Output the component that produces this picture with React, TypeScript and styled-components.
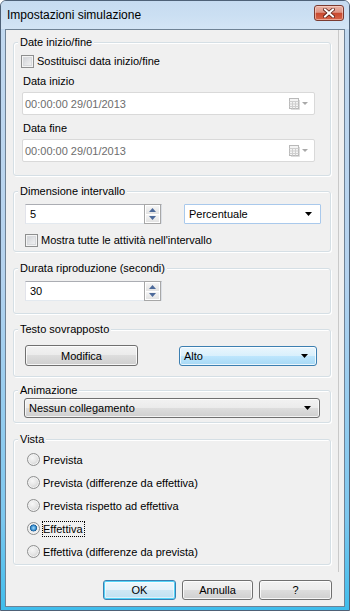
import React from 'react';
import styled, { createGlobalStyle } from 'styled-components';

const Global = createGlobalStyle`
  html, body { margin: 0; padding: 0; width: 350px; height: 611px; overflow: hidden; background: #ffffff; }
  * { box-sizing: border-box; }
  body { font-family: "Liberation Sans", Arial, sans-serif; font-size: 11px; color: #000; }
  #root { width: 350px; height: 611px; }
`;

const Window = styled.div`
  width: 350px;
  height: 611px;
  display: flex;
  flex-direction: column;
  border: 1px solid #4e6177;
  border-radius: 6px 6px 0 0;
  padding: 0 4px 3px 4px;
  background: linear-gradient(180deg, #c3d9ef 0%, #b4d2ee 45%, #7cc7ee 85%, #3fbdec 100%);
`;

const TitleBar = styled.div`
  height: 28px;
  flex: none;
  display: flex;
  align-items: flex-start;
  justify-content: space-between;
  margin: 0 -4px;
  padding: 0 5px 0 6px;
  border-radius: 5px 5px 0 0;
  background: linear-gradient(180deg, #c6dbf0 0%, #cbdff2 50%, #d3e4f5 100%);
`;

const TitleText = styled.span`
  font-size: 12px;
  line-height: 16px;
  margin-top: 6px;
  color: #000;
`;

const CloseButton = styled.div`
  width: 30px;
  height: 16px;
  margin-top: 4px;
  border: 1px solid #7a3a30;
  border-radius: 3px;
  display: flex;
  align-items: center;
  justify-content: center;
  background: linear-gradient(180deg, #eab3a6 0%, #de9585 45%, #c9492f 52%, #d6654a 100%);
  box-shadow: inset 0 0 0 1px rgba(255, 220, 210, 0.55);
`;

const Client = styled.div`
  flex: 1;
  display: flex;
  flex-direction: column;
  background: #f0f0f0;
  border: 1px solid #6f8295;
`;

const Panel = styled.div`
  width: 333px;
  height: 542px;
  flex: none;
  display: flex;
  flex-direction: column;
  padding: 12px 0 0 7px;
  border-right: 1px solid #c9c9c9;
`;

const Group = styled.div<{ $mt?: number; $pt: number; $pb: number; $pl: number }>`
  position: relative;
  width: 318px;
  flex: none;
  margin-top: ${(p) => p.$mt ?? 0}px;
  padding: ${(p) => p.$pt}px 0 ${(p) => p.$pb}px ${(p) => p.$pl}px;
  border: 1px solid #d5dfe5;
  border-radius: 3px;
  box-shadow: inset 1px 1px 0 #ffffff, 1px 1px 0 #ffffff;
  display: flex;
  flex-direction: column;
  align-items: flex-start;
`;

const Legend = styled.span`
  position: absolute;
  top: -9px;
  left: 4px;
  padding: 0 2px;
  line-height: 16px;
  background: #f0f0f0;
  white-space: nowrap;
`;

const Row = styled.div<{ $gap?: number }>`
  display: flex;
  align-items: center;
  gap: ${(p) => p.$gap ?? 0}px;
`;

const CheckRow = styled.label<{ $mt?: number }>`
  display: flex;
  align-items: center;
  gap: 3px;
  height: 16px;
  margin-top: ${(p) => p.$mt ?? 0}px;
  white-space: nowrap;
`;

const CheckBox = styled.span`
  width: 13px;
  height: 13px;
  flex: none;
  border: 1px solid #8e8f8f;
  background: linear-gradient(135deg, #c9ccd1 0%, #e4e5e7 55%, #f6f6f6 100%);
  box-shadow: inset 0 0 0 1px #f4f4f4, inset 0 0 0 2px #d8dadd;
`;

const FieldLabel = styled.div<{ $mt?: number }>`
  height: 16px;
  line-height: 16px;
  margin-top: ${(p) => p.$mt ?? 0}px;
  margin-left: 2px;
`;

const DateBox = styled.div<{ $mt?: number }>`
  width: 293px;
  height: 23px;
  margin-top: ${(p) => p.$mt ?? 0}px;
  margin-left: 1px;
  border: 1px solid #d9d9d9;
  border-radius: 2px;
  background: #ffffff;
  display: flex;
  align-items: center;
  padding: 0 5px 0 2px;
  color: #6d6d6d;
`;

const DateText = styled.span`
  flex: 1;
  line-height: 16px;
`;

const SpinBox = styled.div`
  width: 137px;
  height: 20px;
  flex: none;
  border: 1px solid #abadb3;
  border-color: #abadb3 #dbdfe6 #e3e9ef #e2e3ea;
  background: #ffffff;
  display: flex;
  align-items: stretch;
  padding: 0 0 0 4px;
`;

const SpinText = styled.span`
  flex: 1;
  line-height: 18px;
`;

const SpinColumn = styled.div`
  width: 17px;
  flex: none;
  display: flex;
  flex-direction: column;
  border: 1px solid #a7a7a7;
  margin: -1px 0 -1px 0;
  background: #f0f0f0;
`;

const SpinButton = styled.div<{ $down?: boolean }>`
  flex: 1;
  display: flex;
  align-items: center;
  justify-content: center;
  border: 1px solid #ffffff;
  border-top-width: ${(p) => (p.$down ? 0 : 1)}px;
  background: linear-gradient(180deg, #f5f5f5 0%, #e3e3e3 100%);
`;

const ComboBox = styled.div<{ $w: number; $variant: 'edit' | 'button' | 'hot' }>`
  width: ${(p) => p.$w}px;
  height: 20px;
  flex: none;
  display: flex;
  align-items: center;
  padding: 0 8px 0 4px;
  border: 1px solid
    ${(p) => (p.$variant === 'edit' ? '#a9c9ec' : p.$variant === 'hot' ? '#3c7fb1' : '#707070')};
  border-radius: ${(p) => (p.$variant === 'edit' ? 1 : 3)}px;
  background: ${(p) =>
    p.$variant === 'edit'
      ? '#ffffff'
      : p.$variant === 'hot'
      ? 'linear-gradient(180deg, #eaf6fd 0%, #d9f0fc 49%, #bee6fd 50%, #a7d9f5 100%)'
      : 'linear-gradient(180deg, #f2f2f2 0%, #ebebeb 49%, #dddddd 50%, #cfcfcf 100%)'};
  box-shadow: ${(p) => (p.$variant === 'edit' ? 'none' : 'inset 0 0 0 1px rgba(255,255,255,0.75)')};
`;

const ComboText = styled.span`
  flex: 1;
  line-height: 16px;
  white-space: nowrap;
`;

const PushButton = styled.div<{ $w: number; $h: number; $default?: boolean }>`
  width: ${(p) => p.$w}px;
  height: ${(p) => p.$h}px;
  flex: none;
  display: flex;
  align-items: center;
  justify-content: center;
  line-height: 16px;
  border: 1px solid ${(p) => (p.$default ? '#3c7fb1' : '#707070')};
  border-radius: 3px;
  background: ${(p) =>
    p.$default
      ? 'linear-gradient(180deg, #eef7fc 0%, #e4f2fa 49%, #cfe8f5 50%, #bfe0f1 100%)'
      : 'linear-gradient(180deg, #f2f2f2 0%, #ebebeb 49%, #dddddd 50%, #cfcfcf 100%)'};
  box-shadow: ${(p) =>
    p.$default ? 'inset 0 0 0 1px #54d4f8, inset 0 0 0 2px rgba(255,255,255,0.5)' : 'inset 0 0 0 1px rgba(255,255,255,0.8)'};
`;

const RadioRow = styled.label`
  height: 23px;
  display: flex;
  align-items: center;
  gap: 3px;
  white-space: nowrap;
`;

const Radio = styled.span<{ $checked?: boolean }>`
  width: 13px;
  height: 13px;
  flex: none;
  border-radius: 50%;
  border: 1px solid #8e8f8f;
  background: ${(p) =>
    p.$checked
      ? 'radial-gradient(circle at 50% 45%, #a7defa 0%, #3b8fd0 28%, #1a5c95 40%, #e9e9e9 46%, #f6f6f6 100%)'
      : 'radial-gradient(circle at 40% 35%, #f7f7f7 0%, #e6e6e6 45%, #cfcfcf 80%, #e9e9e9 100%)'};
  box-shadow: inset 0 0 0 1px #f3f3f3;
`;

const FocusText = styled.span`
  outline: 1px dotted #000;
  outline-offset: 0;
  line-height: 14px;
  padding: 0 1px 0 0;
`;

const ButtonRow = styled.div`
  display: flex;
  justify-content: flex-end;
  gap: 6px;
  padding: 8px 12px 0 0;
`;

const Arrow = ({ color = '#000' }: { color?: string }) => (
  <svg width="7" height="4" viewBox="0 0 7 4">
    <path d="M0 0 H7 L3.5 4 Z" fill={color} />
  </svg>
);

const SpinArrow = ({ down }: { down?: boolean }) => (
  <svg width="7" height="4" viewBox="0 0 7 4">
    <path d={down ? 'M0 0 H7 L3.5 4 Z' : 'M0 4 H7 L3.5 0 Z'} fill="#4d6a9a" />
  </svg>
);

const CalendarIcon = () => (
  <svg width="20" height="12" viewBox="0 0 20 12">
    <rect x="0.5" y="0.5" width="9" height="10" fill="#f4f4f4" stroke="#b9b9b9" />
    <path d="M0.5 3.5 H9.5 M0.5 6 H9.5 M0.5 8.5 H9.5 M3.5 3.5 V10.5 M6.5 3.5 V10.5" stroke="#cfcfcf" strokeWidth="1" />
    <path d="M10.5 2 V11.5 H2" stroke="#dcdcdc" fill="none" />
    <path d="M13 4 H19 L16 7 Z" fill="#a9a9a9" />
  </svg>
);

const CloseGlyph = () => (
  <svg width="12" height="10" viewBox="0 0 12 10">
    <path d="M2 1.5 L10 8.5 M10 1.5 L2 8.5" stroke="#5a1d14" strokeWidth="3.6" strokeLinecap="square" />
    <path d="M2 1.5 L10 8.5 M10 1.5 L2 8.5" stroke="#ffffff" strokeWidth="2" strokeLinecap="square" />
  </svg>
);

export default function App() {
  return (
    <>
      <Global />
      <Window>
        <TitleBar>
          <TitleText>Impostazioni simulazione</TitleText>
          <CloseButton>
            <CloseGlyph />
          </CloseButton>
        </TitleBar>
        <Client>
          <Panel>
            <Group $pt={10} $pb={13} $pl={7}>
              <Legend>Date inizio/fine</Legend>
              <CheckRow>
                <CheckBox />
                <span>Sostituisci data inizio/fine</span>
              </CheckRow>
              <FieldLabel $mt={4}>Data inizio</FieldLabel>
              <DateBox $mt={3}>
                <DateText>00:00:00 29/01/2013</DateText>
                <CalendarIcon />
              </DateBox>
              <FieldLabel $mt={5}>Data fine</FieldLabel>
              <DateBox $mt={3}>
                <DateText>00:00:00 29/01/2013</DateText>
                <CalendarIcon />
              </DateBox>
            </Group>

            <Group $mt={15} $pt={12} $pb={3} $pl={11}>
              <Legend>Dimensione intervallo</Legend>
              <Row $gap={22}>
                <SpinBox>
                  <SpinText>5</SpinText>
                  <SpinColumn>
                    <SpinButton>
                      <SpinArrow />
                    </SpinButton>
                    <SpinButton $down>
                      <SpinArrow down />
                    </SpinButton>
                  </SpinColumn>
                </SpinBox>
                <ComboBox $w={137} $variant="edit">
                  <ComboText>Percentuale</ComboText>
                  <Arrow />
                </ComboBox>
              </Row>
              <CheckRow $mt={8}>
                <CheckBox />
                <span>Mostra tutte le attività nell'intervallo</span>
              </CheckRow>
            </Group>

            <Group $mt={16} $pt={12} $pb={12} $pl={11}>
              <Legend>Durata riproduzione (secondi)</Legend>
              <SpinBox>
                <SpinText>30</SpinText>
                <SpinColumn>
                  <SpinButton>
                    <SpinArrow />
                  </SpinButton>
                  <SpinButton $down>
                    <SpinArrow down />
                  </SpinButton>
                </SpinColumn>
              </SpinBox>
            </Group>

            <Group $mt={15} $pt={15} $pb={10} $pl={11}>
              <Legend>Testo sovrapposto</Legend>
              <Row $gap={41}>
                <PushButton $w={113} $h={21}>Modifica</PushButton>
                <ComboBox $w={138} $variant="hot">
                  <ComboText>Alto</ComboText>
                  <Arrow />
                </ComboBox>
              </Row>
            </Group>

            <Group $mt={13} $pt={7} $pb={4} $pl={10}>
              <Legend>Animazione</Legend>
              <ComboBox $w={296} $variant="button">
                <ComboText>Nessun collegamento</ComboText>
                <Arrow />
              </ComboBox>
            </Group>

            <Group $mt={16} $pt={8} $pb={1} $pl={13}>
              <Legend>Vista</Legend>
              <RadioRow>
                <Radio />
                <span>Prevista</span>
              </RadioRow>
              <RadioRow>
                <Radio />
                <span>Prevista (differenze da effettiva)</span>
              </RadioRow>
              <RadioRow>
                <Radio />
                <span>Prevista rispetto ad effettiva</span>
              </RadioRow>
              <RadioRow>
                <Radio $checked />
                <FocusText>Effettiva</FocusText>
              </RadioRow>
              <RadioRow>
                <Radio />
                <span>Effettiva (differenze da prevista)</span>
              </RadioRow>
            </Group>
          </Panel>
          <ButtonRow>
            <PushButton $w={73} $h={20} $default>OK</PushButton>
            <PushButton $w={71} $h={20}>Annulla</PushButton>
            <PushButton $w={73} $h={20}>?</PushButton>
          </ButtonRow>
        </Client>
      </Window>
    </>
  );
}
